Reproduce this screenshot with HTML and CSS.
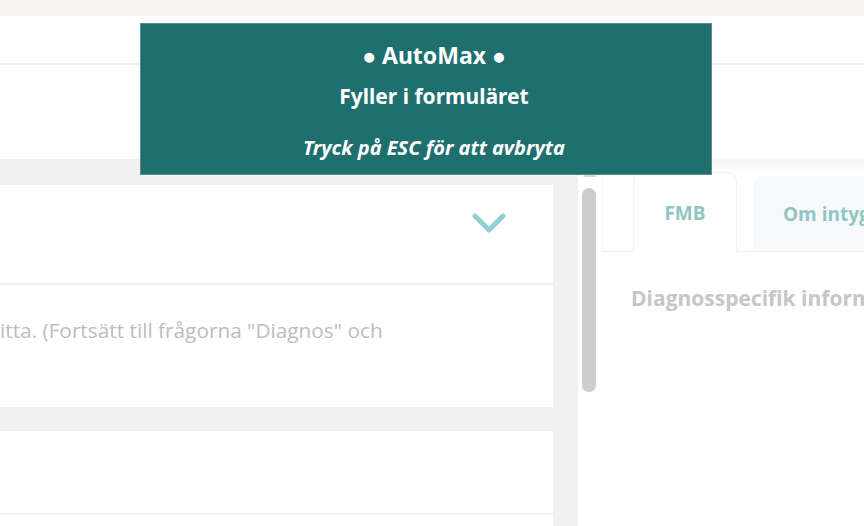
FILE: index.html
```html
<!DOCTYPE html>
<html lang="sv">
<head>
<meta charset="utf-8">
<link rel="stylesheet" href="styles.css">
</head>
<body>
<div class="page">
  <div class="topbar"></div>
  <div class="header"></div>
  <div class="subheader"></div>
  <div class="main">
    <div class="left">
      <div class="card card-head">
        <svg class="chevron" width="34" height="22" viewBox="0 0 34 22"><path d="M3 3 L17 17 L31 3" fill="none" stroke="#8fd2d1" stroke-width="5" stroke-linecap="round" stroke-linejoin="round"/></svg>
      </div>
      <div class="card card-text">
        <p class="muted">itta. (Fortsätt till frågorna "Diagnos" och</p>
      </div>
      <div class="card card-third"></div>
      <div class="card card-fourth"></div>
    </div>
    <div class="scroll">
      <div class="scroll-up"></div>
      <div class="thumb"></div>
    </div>
    <div class="right">
      <div class="tabs">
        <div class="tab active">FMB</div>
        <div class="tab">Om intyget</div>
      </div>
      <div class="panel">
        <h3 class="panel-title">Diagnosspecifik information</h3>
      </div>
    </div>
  </div>
  <div class="overlay">
    <div class="ov-title">● AutoMax ●</div>
    <div class="ov-sub">Fyller i formuläret</div>
    <div class="ov-hint">Tryck på ESC för att avbryta</div>
  </div>
</div>
</body>
</html>
```
FILE: styles.css
```css
html, body {
  margin: 0;
  padding: 0;
  width: 864px;
  height: 526px;
  overflow: hidden;
  background: #ffffff;
  font-family: "Open Sans", "Noto Sans", sans-serif;
}
.page {
  position: relative;
  width: 864px;
  height: 526px;
  display: flex;
  flex-direction: column;
}
.topbar {
  height: 16px;
  background: #f5f4f2;
}
.header {
  height: 47px;
  background: #ffffff;
  border-bottom: 2px solid #f0f0f0;
}
.subheader {
  height: 94px;
  background: #ffffff;
}
.main {
  flex: 1;
  display: flex;
  min-height: 0;
}
.left {
  width: 578px;
  background: #f1f1f1;
  padding-top: 26px;
  box-sizing: border-box;
  display: flex;
  flex-direction: column;
  overflow: hidden;
}
.card {
  width: 553px;
  background: #ffffff;
  flex-shrink: 0;
}
.card-head {
  height: 98px;
  border-bottom: 2px solid #efefef;
  display: flex;
  justify-content: flex-end;
  align-items: flex-start;
  box-sizing: content-box;
}
.chevron {
  margin-right: 47px;
  margin-top: 28px;
}
.card-text {
  height: 122px;
  display: flex;
  align-items: flex-start;
  overflow: hidden;
}
.muted {
  margin: 30px 0 0 0;
  font-size: 20.8px;
  line-height: 30px;
  color: #bdbdbd;
  white-space: nowrap;
}
.card-third {
  margin-top: 24px;
  height: 82px;
  border-bottom: 2px solid #efefef;
}
.card-fourth {
  height: 40px;
}
.scroll {
  width: 24px;
  background: #ffffff;
  position: relative;
  flex-shrink: 0;
}
.scroll-up {
  position: absolute;
  left: 5px;
  top: 10px;
  width: 0;
  height: 0;
  border-left: 7px solid transparent;
  border-right: 7px solid transparent;
  border-bottom: 8px solid #d6d6d6;
}
.thumb {
  position: absolute;
  left: 4px;
  top: 29px;
  width: 14px;
  height: 204px;
  border-radius: 7px;
  background: #cdcdcd;
}
.right {
  flex: 1;
  display: flex;
  flex-direction: column;
  background: linear-gradient(#f4f4f4, #ffffff 14px);
  padding-top: 13px;
  min-width: 0;
  overflow: hidden;
}
.tabs {
  display: flex;
  gap: 16px;
  align-items: flex-end;
  height: 79px;
  border-left: 1px solid #f4f4f4;
  border-bottom: 1px solid #f0f0f0;
  padding-left: 30px;
  background: #ffffff;
}
.tab {
  height: 75px;
  width: 160px;
  border-radius: 9px 9px 0 0;
  background: #f8f9fa;
  color: #8ec6c4;
  font-weight: 700;
  font-size: 19px;
  display: flex;
  align-items: center;
  padding-left: 30px;
  flex-shrink: 0;
  box-sizing: border-box;
  white-space: nowrap;
}
.tab.active {
  width: 104px;
  height: 80px;
  margin-bottom: -1px;
  background: #ffffff;
  border: 1px solid #f0f0f0;
  border-bottom: none;
  justify-content: center;
  padding-left: 0;
  padding-top: 1px;
}
.panel {
  padding: 32px 0 0 29px;
}
.panel-title {
  margin: 0;
  font-size: 21px;
  font-weight: 700;
  color: #c6c6c6;
  white-space: nowrap;
}
.overlay {
  position: absolute;
  left: 140px;
  top: 23px;
  width: 572px;
  height: 152px;
  box-sizing: border-box;
  background: #1f6f6f;
  border: 1px solid #5f8a8a;
  color: #ffffff;
  display: flex;
  flex-direction: column;
  align-items: center;
  padding-left: 16px;
  font-family: "Noto Sans", "Open Sans", sans-serif;
  font-weight: 700;
}
.ov-title {
  margin-top: 16px;
  font-size: 23px;
  line-height: 30px;
}
.ov-sub {
  margin-top: 12px;
  font-size: 21px;
  line-height: 28px;
}
.ov-hint {
  margin-top: 24px;
  font-size: 20px;
  line-height: 28px;
  font-style: italic;
}
```
